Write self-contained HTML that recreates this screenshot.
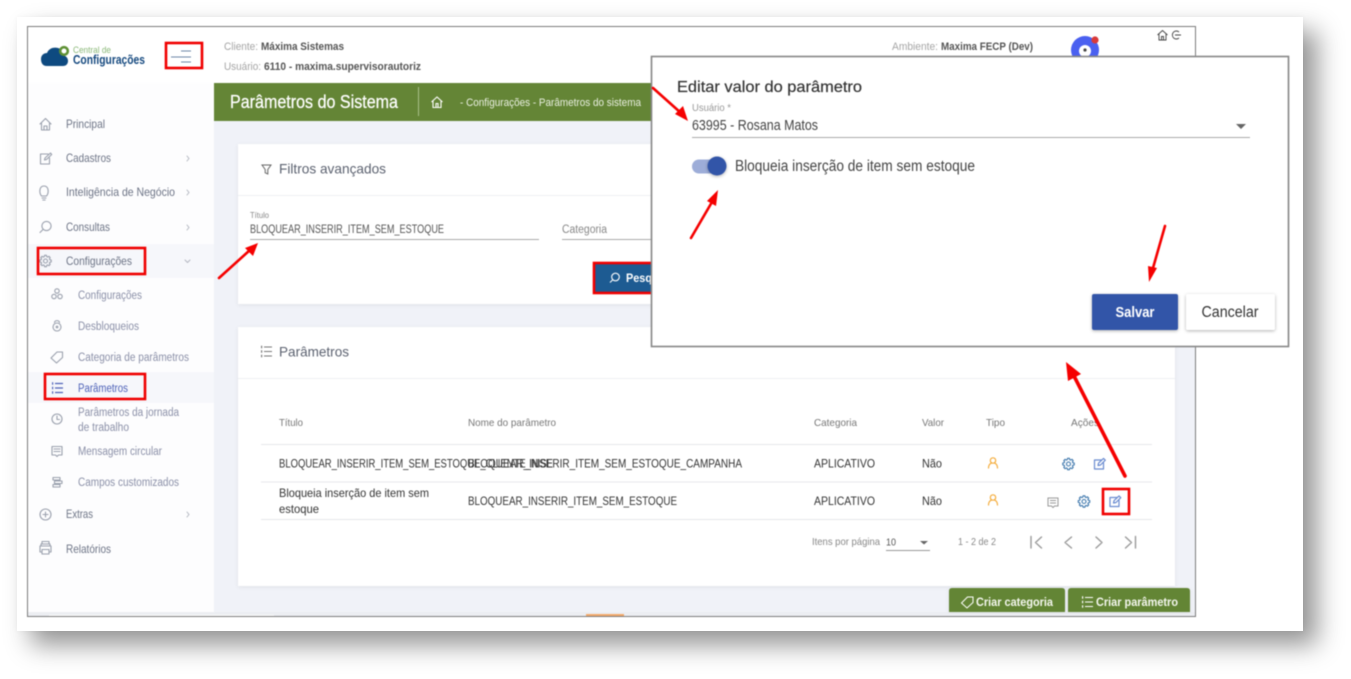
<!DOCTYPE html>
<html lang="pt-BR"><head><meta charset="utf-8"><title>Parâmetros do Sistema</title>
<style>
html,body{margin:0;padding:0;width:1351px;height:679px;overflow:hidden;background:#fff}
#sheet{position:absolute;left:17px;top:17px;width:1286px;height:614px;background:#fff;box-shadow:14px 14px 24px rgba(0,0,0,.42),0 0 6px rgba(0,0,0,.04)}
svg{position:absolute;left:0;top:0;filter:blur(.4px)}
text{font-family:"Liberation Sans",sans-serif}
.s{font-size:12px;fill:#6d7486}
.u{font-size:11.5px;fill:#8b90a8}
.h{font-size:10.5px;fill:#777}
.r{font-size:12px;fill:#333}
.i{fill:none;stroke:#9aa0ad;stroke-width:1.1;stroke-linecap:round;stroke-linejoin:round}
.c{fill:none;stroke:#b5b8c2;stroke-width:1;stroke-linecap:round;stroke-linejoin:round}
.a{stroke:#f50000;stroke-width:2.6;stroke-linecap:round;fill:none}
.rb{fill:none;stroke:#f00000;stroke-width:2.6}
.e{fill:none;stroke:#6a8bd0;stroke-width:1.2;stroke-linecap:round;stroke-linejoin:round}
.g{fill:none;stroke:#3f78ad;stroke-width:1.1;stroke-linecap:round;stroke-linejoin:round}
.o{fill:none;stroke:#f4ad3d;stroke-width:1.2;stroke-linecap:round;stroke-linejoin:round}
.p{fill:none;stroke:#9a9a9a;stroke-width:1.4;stroke-linecap:round;stroke-linejoin:round}
</style></head><body>
<div id="sheet"></div>
<svg width="1351" height="679" viewBox="0 0 1351 679" xmlns="http://www.w3.org/2000/svg">
<defs>
<filter id="sh" x="-20%" y="-20%" width="140%" height="150%"><feDropShadow dx="0" dy="1" stdDeviation="1.5" flood-color="#000" flood-opacity=".3"/></filter>
<filter id="cs" x="-5%" y="-5%" width="110%" height="110%"><feDropShadow dx="0" dy="1" stdDeviation="2" flood-color="#000" flood-opacity=".07"/></filter>
<g id="gear"><path d="M4.33-1.24L5.73-.91L5.73.91L4.33 1.24L3.94 2.18L4.69 3.41L3.41 4.69L2.18 3.94L1.24 4.33L.91 5.73L-.91 5.73L-1.24 4.33L-2.18 3.94L-3.41 4.69L-4.69 3.41L-3.94 2.18L-4.33 1.24L-5.73.91L-5.73-.91L-4.33-1.24L-3.94-2.18L-4.69-3.41L-3.41-4.69L-2.18-3.94L-1.24-4.33L-.91-5.73L.91-5.73L1.24-4.33L2.18-3.94L3.41-4.69L4.69-3.41L3.94-2.18Z"/><circle r="2"/></g>
<g id="edit"><path d="M2-4H-5V5H4V-1"/><path d="M-1.5 1.5 L-1 -.8 L4 -5.6 L5.8 -3.8 L1 1z"/></g>
<g id="list"><path d="M-2-4.5H6M-2 0H6M-2 4.5H6" /><path d="M-5-4.5h1.2M-5 0h1.2M-5 4.5h1.2" stroke-width="2.4"/></g>
<g id="user"><circle cy="-2.5" r="2.7"/><path d="M-4.5 5C-4.5 1-2.5.5-1.5 0M4.5 5C4.5 1 2.5.5 1.5 0"/></g>
<g id="tag"><path d="M-6 1 L0-5 L5.5-5 L5.5 .5 L-.5 6z"/></g>
</defs>

<!-- app frame -->
<rect x="28" y="27" width="1167" height="589" fill="#f0f2f8"/>
<rect x="28" y="27" width="1167" height="56" fill="#fff"/>
<rect x="28" y="83" width="186" height="529" fill="#fdfdfe"/>
<rect x="28" y="244" width="186" height="34" fill="#f6f7fb"/>
<rect x="28" y="372" width="186" height="31" fill="#f6f7fb"/>
<rect x="28" y="612" width="1167" height="4" fill="#eceef2"/>
<rect x="49" y="615" width="225" height="1" fill="#fff"/>
<rect x="586" y="614" width="38" height="2" fill="#f4a96b"/>

<!-- logo -->
<path d="M47 66C42 66 41 62 41 59C41 55 44 53 47 53C49 48 54 47 58 48C62 49 65 53 65 56C67 57 68 59 68 61C68 64 66 66 63 66Z" fill="#0e4a80"/>
<circle cx="64" cy="51" r="3.8" fill="#fff" stroke="#5f9135" stroke-width="2.6"/>
<text x="73" y="53" font-size="9.5" fill="#8ab878" textLength="38" lengthAdjust="spacingAndGlyphs">Central de</text>
<text x="73" y="64" font-size="12.5" font-weight="700" fill="#15497f" textLength="72" lengthAdjust="spacingAndGlyphs">Configurações</text>
<path d="M181 51H191M171 57H191M181 62H191" stroke="#6d86a8" stroke-width="1.1" fill="none"/>
<rect x="166" y="43" width="36" height="25" class="rb"/>

<!-- top header -->
<text x="224" y="50" font-size="11" fill="#a5a5a5" textLength="34" lengthAdjust="spacingAndGlyphs">Cliente:</text>
<text x="261" y="50" font-size="11" font-weight="700" fill="#555" textLength="83" lengthAdjust="spacingAndGlyphs">Máxima Sistemas</text>
<text x="224" y="70" font-size="11" fill="#a5a5a5" textLength="37" lengthAdjust="spacingAndGlyphs">Usuário:</text>
<text x="264" y="70" font-size="11" font-weight="700" fill="#555" textLength="157" lengthAdjust="spacingAndGlyphs">6110 - maxima.supervisorautoriz</text>
<text x="892" y="50" font-size="11" fill="#a5a5a5" textLength="46" lengthAdjust="spacingAndGlyphs">Ambiente:</text>
<text x="941" y="50" font-size="11" font-weight="700" fill="#555" textLength="92" lengthAdjust="spacingAndGlyphs">Maxima FECP (Dev)</text>
<circle cx="1085" cy="50" r="14" fill="#4a60f0"/><circle cx="1085" cy="51" r="6" fill="#fff"/><circle cx="1085" cy="50" r="1.600" fill="#444"/>
<circle cx="1095" cy="40" r="3.6" fill="#d93a3a"/>
<path d="M1157.500 35L1162.500 30.500L1167.500 35M1159 34V40H1166V34M1161.500 40V36.500H1163.500V40" fill="none" stroke="#444" stroke-width=".9"/>
<path d="M1179 32A4 4 0 1 0 1179 38M1175 35H1181" fill="none" stroke="#444" stroke-width=".9"/>

<!-- green bar -->
<rect x="214" y="83" width="440" height="38" fill="#648536"/>
<text x="230" y="108" font-size="18" fill="#fff" stroke="#fff" stroke-width=".25" textLength="168" lengthAdjust="spacingAndGlyphs">Parâmetros do Sistema</text>
<path d="M418.500 87V116" stroke="#a9bf89" stroke-width="1"/>
<path d="M431.500 102L437 97L442.500 102M433 101V107.500H441V101M436 107.500V103.500H438V107.500" fill="none" stroke="#fff" stroke-width="1.1"/>
<text x="460" y="106" font-size="11" fill="#e9efe0" textLength="181" lengthAdjust="spacingAndGlyphs">- Configurações - Parâmetros do sistema</text>

<!-- sidebar -->
<g class="i">
<path d="M40 124L45.500 118.500L51 124M41.500 123V130H49.500V123M44 130V126H47V130"/>
<path d="M48 154H40.500V164H49.500V158M44.500 160L45 158L50.500 153L51.700 154.500L46.500 159.500z"/>
<path d="M41.500 196C39 193 39 186 44 186C49 186 49 193 46.500 196ZM42 198H46M42.800 200H45.200"/>
<circle cx="46.500" cy="226" r="4.600"/><path d="M43 229.500L40 232.500"/>
<use href="#gear" x="45.500" y="261"/>
<circle cx="45.500" cy="514.500" r="5.500"/><path d="M45.500 512V517M43 514.500H48"/>
<path d="M41 546V544H50V546M41 552H40V546H51V552H50M42 549.500H49V554H42z M42 544V541.500H49V544"/>
<path d="M187 156L189 158.500L187 161M187 190L189 192.500L187 195M187 225L189 227.500L187 230M187 512L189 514.500L187 517" class="c"/>
<path d="M185 260L187.500 262.500L190 260" class="c"/>
<circle cx="57" cy="291" r="2.200"/><circle cx="54" cy="296.500" r="2.200"/><circle cx="60" cy="296.500" r="2.200"/>
<circle cx="57" cy="327" r="4"/><circle cx="57" cy="327" r=".8"/><path d="M54.500 322.500C55 320 59 320 59.500 322.500"/>
<use href="#tag" x="57" y="357"/>
<circle cx="57" cy="419" r="5"/><path d="M57 416V419.500H59.500"/>
<path d="M52 446.500H62V455H58.500L57 456.500L55.500 455H52zM54 449H60M54 451.500H60"/>
<path d="M53 477.500H60V480H53zM54.500 481H62V483.500H54.500zM53 484.500H60V487H53z"/>
</g>
<use href="#list" x="57" y="388" fill="none" stroke="#4e62b8" stroke-width="1.200"/>
<text x="66" y="128" class="s" textLength="39" lengthAdjust="spacingAndGlyphs">Principal</text>
<text x="66" y="162" class="s" textLength="45" lengthAdjust="spacingAndGlyphs">Cadastros</text>
<text x="66" y="196" class="s" textLength="109" lengthAdjust="spacingAndGlyphs">Inteligência de Negócio</text>
<text x="66" y="231" class="s" textLength="44" lengthAdjust="spacingAndGlyphs">Consultas</text>
<text x="66" y="265" class="s" textLength="66" lengthAdjust="spacingAndGlyphs">Configurações</text>
<text x="78" y="299" class="u" textLength="64" lengthAdjust="spacingAndGlyphs">Configurações</text>
<text x="78" y="330" class="u" textLength="61" lengthAdjust="spacingAndGlyphs">Desbloqueios</text>
<text x="78" y="361" class="u" textLength="111" lengthAdjust="spacingAndGlyphs">Categoria de parâmetros</text>
<text x="78" y="392" class="u" style="fill:#4e62b8" textLength="50" lengthAdjust="spacingAndGlyphs">Parâmetros</text>
<text x="78" y="416" class="u" textLength="101" lengthAdjust="spacingAndGlyphs">Parâmetros da jornada</text>
<text x="78" y="431" class="u" textLength="51" lengthAdjust="spacingAndGlyphs">de trabalho</text>
<text x="78" y="455" class="u" textLength="84" lengthAdjust="spacingAndGlyphs">Mensagem circular</text>
<text x="78" y="486" class="u" textLength="101" lengthAdjust="spacingAndGlyphs">Campos customizados</text>
<text x="66" y="518" class="s" textLength="27" lengthAdjust="spacingAndGlyphs">Extras</text>
<text x="66" y="553" class="s" textLength="45" lengthAdjust="spacingAndGlyphs">Relatórios</text>
<rect x="38" y="248" width="107" height="26" class="rb"/>
<rect x="45" y="374" width="100" height="25" class="rb"/>

<!-- filter card -->
<rect x="238" y="144" width="420" height="160" fill="#fff" filter="url(#cs)"/>
<path d="M238 195.500H658" stroke="#eef0f3"/>
<path d="M262 165H271L267.800 169.500V174L265.200 172.800V169.500Z" fill="none" stroke="#666" stroke-width="1"/>
<text x="279" y="173.500" font-size="14" fill="#5c6270" textLength="107" lengthAdjust="spacingAndGlyphs">Filtros avançados</text>
<text x="250" y="218" font-size="8.500" fill="#888" textLength="19" lengthAdjust="spacingAndGlyphs">Título</text>
<text x="250" y="233" font-size="11.500" fill="#555" textLength="194" lengthAdjust="spacingAndGlyphs">BLOQUEAR_INSERIR_ITEM_SEM_ESTOQUE</text>
<path d="M250 239.500H539M562 239.500H652" stroke="#aaa" stroke-width="1"/>
<text x="562" y="233" font-size="11.500" fill="#888" textLength="45" lengthAdjust="spacingAndGlyphs">Categoria</text>
<rect x="594" y="263" width="60" height="30" fill="#1d5b92" stroke="#f00000" stroke-width="2.600"/>
<circle cx="615.500" cy="277" r="3.800" fill="none" stroke="#fff" stroke-width="1.100"/><path d="M612.500 280L610 282.500" stroke="#fff" stroke-width="1.100"/>
<text x="626" y="282" font-size="11.500" font-weight="700" fill="#fff" textLength="26" lengthAdjust="spacingAndGlyphs">Pesq</text>

<!-- params card -->
<rect x="238" y="327" width="937" height="259" fill="#fff" filter="url(#cs)"/>
<path d="M238 378.500H1175" stroke="#eef0f3"/>
<use href="#list" x="266" y="351.500" fill="none" stroke="#777" stroke-width="1"/>
<text x="279" y="356.500" font-size="14" fill="#5c6270" textLength="70" lengthAdjust="spacingAndGlyphs">Parâmetros</text>
<text x="279" y="426" class="h" textLength="24" lengthAdjust="spacingAndGlyphs">Título</text>
<text x="468" y="426" class="h" textLength="88" lengthAdjust="spacingAndGlyphs">Nome do parâmetro</text>
<text x="814" y="426" class="h" textLength="43" lengthAdjust="spacingAndGlyphs">Categoria</text>
<text x="922" y="426" class="h" textLength="22" lengthAdjust="spacingAndGlyphs">Valor</text>
<text x="986" y="426" class="h" textLength="19" lengthAdjust="spacingAndGlyphs">Tipo</text>
<text x="1071" y="426" class="h" textLength="28" lengthAdjust="spacingAndGlyphs">Ações</text>
<path d="M261 444.500H1152M261 482H1152M261 519.500H1152" stroke="#e6e7ea" stroke-width="1"/>
<text x="279" y="467.500" class="r" textLength="274" lengthAdjust="spacingAndGlyphs">BLOQUEAR_INSERIR_ITEM_SEM_ESTOQUE_CLIENTE_NISE</text>
<text x="468" y="467.500" class="r" textLength="274" lengthAdjust="spacingAndGlyphs">BLOQUEAR_INSERIR_ITEM_SEM_ESTOQUE_CAMPANHA</text>
<text x="279" y="497" class="r" textLength="150" lengthAdjust="spacingAndGlyphs">Bloqueia inserção de item sem</text>
<text x="279" y="513" class="r" textLength="40" lengthAdjust="spacingAndGlyphs">estoque</text>
<text x="468" y="505" class="r" textLength="209" lengthAdjust="spacingAndGlyphs">BLOQUEAR_INSERIR_ITEM_SEM_ESTOQUE</text>
<text x="814" y="467.500" class="r" textLength="61" lengthAdjust="spacingAndGlyphs">APLICATIVO</text>
<text x="814" y="505" class="r" textLength="61" lengthAdjust="spacingAndGlyphs">APLICATIVO</text>
<text x="922" y="467.500" class="r" textLength="20" lengthAdjust="spacingAndGlyphs">Não</text>
<text x="922" y="505" class="r" textLength="20" lengthAdjust="spacingAndGlyphs">Não</text>
<use href="#user" x="993" y="463" class="o"/>
<use href="#user" x="993" y="500" class="o"/>
<use href="#gear" x="1068.500" y="464" class="g"/>
<use href="#gear" x="1084" y="501.500" class="g"/>
<use href="#edit" x="1099.500" y="464" class="e"/>
<use href="#edit" x="1115" y="501.500" class="e"/>
<path d="M1048 498H1058V506H1054.500L1053 507.500L1051.500 506H1048ZM1050 500.500H1056M1050 503H1056" fill="none" stroke="#999" stroke-width="1"/>
<rect x="1103" y="489" width="26" height="25" class="rb"/>

<!-- pagination -->
<text x="812" y="545" font-size="10.500" fill="#888" textLength="68" lengthAdjust="spacingAndGlyphs">Itens por página</text>
<text x="886" y="545.500" font-size="10.500" fill="#555" textLength="10" lengthAdjust="spacingAndGlyphs">10</text>
<path d="M920 541H928L924 544.500Z" fill="#666"/>
<path d="M886 550.500H930" stroke="#999"/>
<text x="958" y="545" font-size="10.500" fill="#888" textLength="38" lengthAdjust="spacingAndGlyphs">1 - 2 de 2</text>
<path d="M1031 536.500V548M1041.500 537L1035.500 542.500L1041.500 548M1071.500 537L1065 542.500L1071.500 548M1096 537L1102 542.500L1096 548M1125.500 537L1131.500 542.500L1125.500 548M1135.500 536.500V548" class="p"/>

<!-- bottom buttons -->
<path d="M949 612V591Q949 588 952 588H1062Q1065 588 1065 591V612Z" fill="#648536" filter="url(#cs)"/>
<path d="M1068 612V591Q1068 588 1071 588H1187Q1190 588 1190 591V612Z" fill="#648536" filter="url(#cs)"/>
<use href="#tag" x="967.500" y="602" fill="none" stroke="#fff" stroke-width="1"/>
<text x="976" y="606" font-size="12" font-weight="700" fill="#f4f7ee" textLength="77" lengthAdjust="spacingAndGlyphs">Criar categoria</text>
<use href="#list" x="1087" y="602" fill="none" stroke="#fff" stroke-width="1.100"/>
<text x="1096" y="606" font-size="12" font-weight="700" fill="#f4f7ee" textLength="82" lengthAdjust="spacingAndGlyphs">Criar parâmetro</text>

<!-- frame outline -->
<rect x="27.500" y="26.500" width="1168" height="590" fill="none" stroke="#7c7c7c" stroke-width="1"/>

<!-- modal -->
<rect x="651.500" y="56.500" width="637" height="290" fill="#fff" stroke="#868686" stroke-width="1.600"/>
<text x="677" y="92" font-size="16" fill="#333" stroke="#333" stroke-width=".2" textLength="185" lengthAdjust="spacingAndGlyphs">Editar valor do parâmetro</text>
<text x="692" y="111" font-size="10" fill="#999" textLength="39" lengthAdjust="spacingAndGlyphs">Usuário *</text>
<text x="692" y="130" font-size="14.500" fill="#444" textLength="126" lengthAdjust="spacingAndGlyphs">63995 - Rosana Matos</text>
<path d="M692 137.500H1250" stroke="#aaa" stroke-width="1"/>
<path d="M1236 124H1246L1241 129Z" fill="#666"/>
<rect x="692" y="159.500" width="28" height="14" rx="7" fill="#9dadd8"/>
<circle cx="717" cy="166" r="9.500" fill="#3355a8" filter="url(#sh)"/>
<text x="735" y="171" font-size="15.500" fill="#444" textLength="240" lengthAdjust="spacingAndGlyphs">Bloqueia inserção de item sem estoque</text>
<rect x="1092" y="294" width="86" height="36" rx="2" fill="#3355a8" filter="url(#sh)"/>
<text x="1135" y="317" font-size="15" font-weight="700" fill="#fff" text-anchor="middle" textLength="39" lengthAdjust="spacingAndGlyphs">Salvar</text>
<rect x="1186" y="294" width="89" height="36" rx="2" fill="#fff" filter="url(#sh)"/>
<text x="1230" y="317" font-size="15.500" fill="#333" text-anchor="middle" textLength="57" lengthAdjust="spacingAndGlyphs">Cancelar</text>

<!-- arrows -->
<path d="M219 278L250 250" class="a"/><path d="M258 243L253 256L245 248Z" fill="#f50000"/>
<path d="M653 88L681 113" class="a"/><path d="M688 121L675 114L683 106Z" fill="#f50000"/>
<path d="M691 238L712 202" class="a"/><path d="M718 190L716 206L707 201Z" fill="#f50000"/>
<path d="M1165 226L1153 268" class="a"/><path d="M1149 282L1148 266L1157 268Z" fill="#f50000"/>
<path d="M1125 476L1074 376" class="a" style="stroke-width:3.600"/><path d="M1066 362L1081 374L1068 381Z" fill="#f50000"/>
</svg>
</body></html>
